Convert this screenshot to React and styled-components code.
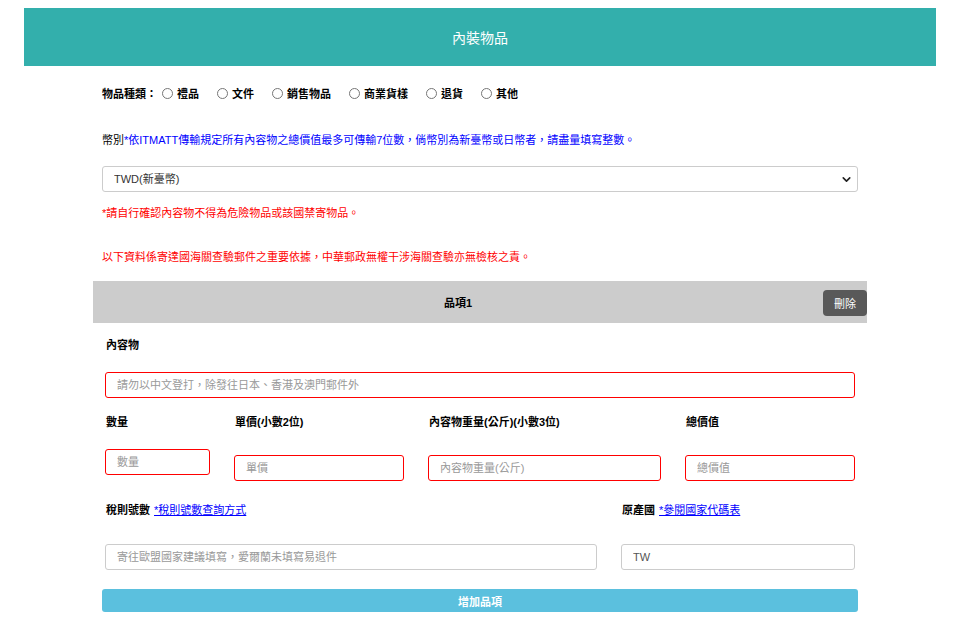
import React from "react";
import styled, { createGlobalStyle } from "styled-components";
import { ChevronDown } from "lucide-react";

const Global = createGlobalStyle`
  html, body { margin: 0; padding: 0; background: #fff; }
  body { font-family: "Liberation Sans", "Noto Sans CJK TC", sans-serif; font-size: 11px; color: #000; }
  * { box-sizing: border-box; }
`;

const Page = styled.div`
  padding-top: 8px;
`;

const Header = styled.div`
  margin: 0 25px 0 24px;
  height: 58px;
  background: #33afac;
  color: #fff;
  font-size: 14px;
  display: flex;
  align-items: center;
  justify-content: center;
`;

const Content = styled.div`
  margin: 0 103px 0 102px;
  display: flex;
  flex-direction: column;
`;

const Line = styled.div`
  height: 16px;
  line-height: 16px;
  display: flex;
  align-items: center;
  margin-top: ${(p) => p.$mt}px;
  color: ${(p) => p.$color || "#000"};
  white-space: nowrap;
`;

const RadioOpt = styled.label`
  display: inline-flex;
  align-items: center;
  margin-right: 13px;
`;

const Circle = styled.span`
  width: 11px;
  height: 11px;
  border-radius: 50%;
  border: 1px solid #767676;
  background: #fff;
  margin: 0 4px 2px 5px;
  display: inline-block;
`;

const Blue = styled.span`
  color: #0000ff;
`;

const SelectWrap = styled.div`
  position: relative;
  margin-top: 18px;
  height: 26px;
`;

const Select = styled.select`
  appearance: none;
  width: 100%;
  height: 26px;
  border: 1px solid #ccc;
  border-radius: 3px;
  background: #fff;
  padding: 0 11px;
  font-family: inherit;
  font-size: 11px;
  color: #333;
`;

const Arrow = styled(ChevronDown)`
  position: absolute;
  right: 5px;
  top: 7px;
  pointer-events: none;
  color: #222;
`;

const Item = styled.div`
  margin: 16px -9px 0;
  display: flex;
  flex-direction: column;
`;

const ItemBar = styled.div`
  height: 42px;
  background: #ccc;
  display: flex;
  align-items: center;
`;

const ItemTitle = styled.div`
  flex: 1;
  text-align: center;
  font-weight: bold;
  font-size: 11px;
`;

const DeleteBtn = styled.button`
  width: 44px;
  height: 26px;
  margin-top: 2px;
  border: none;
  border-radius: 4px;
  background: #595959;
  color: #fff;
  font-family: inherit;
  font-size: 11px;
  padding: 0;
`;

const ItemBody = styled.div`
  padding: 0 12px;
  display: flex;
  flex-direction: column;
`;

const Label = styled.div`
  height: 16px;
  line-height: 16px;
  font-weight: bold;
  padding-left: 1px;
  white-space: nowrap;
  margin-top: ${(p) => p.$mt || 0}px;
`;

const Link = styled.a`
  color: #0000ff;
  text-decoration: underline;
  font-weight: normal;
  margin-left: 4px;
`;

const Input = styled.input`
  display: block;
  width: 100%;
  height: 26px;
  margin-top: ${(p) => p.$mt}px;
  border: 1px solid ${(p) => (p.$error ? "#ff0000" : "#ccc")};
  border-radius: 3px;
  padding: 0 11px;
  font-family: inherit;
  font-size: 11px;
  color: #555;
  background: #fff;
  &::placeholder { color: #999; }
`;

const Grid = styled.div`
  display: grid;
  grid-template-columns: ${(p) => p.$cols};
  column-gap: 24px;
  margin-top: ${(p) => p.$mt}px;
`;

const Field = styled.div`
  display: flex;
  flex-direction: column;
`;

const AddBtn = styled.button`
  margin-top: 19px;
  height: 23px;
  border: none;
  border-radius: 3px;
  background: #5bc0de;
  color: #fff;
  font-family: inherit;
  font-weight: bold;
  font-size: 11px;
`;

const kinds = ["禮品", "文件", "銷售物品", "商業貨樣", "退貨", "其他"];

export default function App() {
  return (
    <Page>
      <Global />
      <Header>內裝物品</Header>
      <Content>
        <Line $mt={20}>
          <b>物品種類：</b>
          {kinds.map((k) => (
            <RadioOpt key={k}>
              <Circle />
              <b>{k}</b>
            </RadioOpt>
          ))}
        </Line>
        <Line $mt={30}>
          幣別<Blue>*依ITMATT傳輸規定所有內容物之總價值最多可傳輸7位數，倘幣別為新臺幣或日幣者，請盡量填寫整數。</Blue>
        </Line>
        <SelectWrap>
          <Select defaultValue="TWD">
            <option value="TWD">TWD(新臺幣)</option>
          </Select>
          <Arrow size={13} strokeWidth={3} />
        </SelectWrap>
        <Line $mt={13} $color="#ff0000">*請自行確認內容物不得為危險物品或該國禁寄物品。</Line>
        <Line $mt={28} $color="#ff0000">以下資料係寄達國海關查驗郵件之重要依據，中華郵政無權干涉海關查驗亦無檢核之責。</Line>
        <Item>
          <ItemBar>
            <ItemTitle>品項1</ItemTitle>
            <DeleteBtn>刪除</DeleteBtn>
          </ItemBar>
          <ItemBody>
            <Label $mt={14}>內容物</Label>
            <Input $mt={19} $error placeholder="請勿以中文登打，除發往日本、香港及澳門郵件外" />
            <Grid $mt={16} $cols="105px 170px 233px 170px">
              <Field>
                <Label>數量</Label>
                <Input $mt={19} $error placeholder="數量" />
              </Field>
              <Field>
                <Label>單價(小數2位)</Label>
                <Input $mt={25} $error placeholder="單價" />
              </Field>
              <Field>
                <Label>內容物重量(公斤)(小數3位)</Label>
                <Input $mt={25} $error placeholder="內容物重量(公斤)" />
              </Field>
              <Field>
                <Label>總價值</Label>
                <Input $mt={25} $error placeholder="總價值" />
              </Field>
            </Grid>
            <Grid $mt={21} $cols="492px 234px">
              <Field>
                <Label>
                  稅則號數<Link href="#">*稅則號數查詢方式</Link>
                </Label>
                <Input $mt={26} placeholder="寄往歐盟國家建議填寫，愛爾蘭未填寫易退件" />
              </Field>
              <Field>
                <Label>
                  原產國<Link href="#">*參閱國家代碼表</Link>
                </Label>
                <Input $mt={26} defaultValue="TW" />
              </Field>
            </Grid>
          </ItemBody>
        </Item>
        <AddBtn>增加品項</AddBtn>
      </Content>
    </Page>
  );
}
